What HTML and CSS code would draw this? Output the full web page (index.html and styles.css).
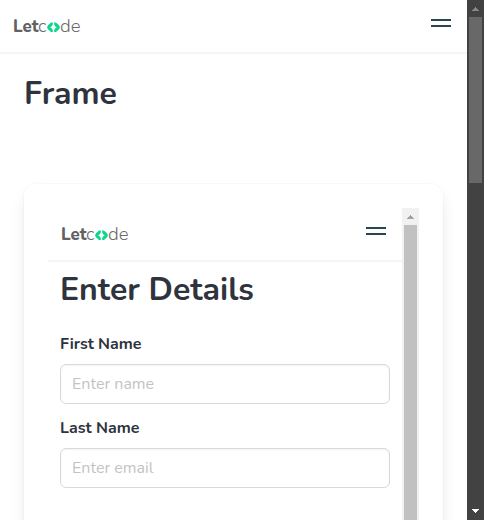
FILE: index.html
```
<!DOCTYPE html>
<html lang="en">
<head>
<meta charset="utf-8">
<title>Frame</title>
<link rel="stylesheet" href="styles.css">
</head>
<body>
<div class="window">
  <div class="page">
    <header class="nav">
      <svg class="logo" width="70" height="24" viewBox="0 -3 70 24" role="img" aria-label="Letcode">
        <text class="logo-bold" x="0" y="14.3" textLength="25.5" lengthAdjust="spacingAndGlyphs">Let</text>
        <text class="logo-thin" x="25" y="14.3" textLength="8.5" lengthAdjust="spacingAndGlyphs">c</text>
        <path class="logo-mark" d="M39.8 4.6H38L34.7 7.5Q33.6 9.3 34.7 11.1L38 14H39.8V12.2Q39.3 10.2 37.2 9.3Q39.3 8.4 39.8 6.4Z M41.2 4.6H43L46.3 7.5Q47.4 9.3 46.3 11.1L43 14H41.2V12.2Q41.7 10.2 43.8 9.3Q41.7 8.4 41.2 6.4Z"/>
        <text class="logo-thin" x="47" y="14.3" textLength="20.5" lengthAdjust="spacingAndGlyphs">de</text>
      </svg>
      <div class="burger"><span></span><span></span></div>
    </header>
    <main class="content">
      <h1 class="title frame-title">Frame</h1>
      <section class="card">
        <div class="frame">
          <div class="frame-page">
            <header class="nav">
              <svg class="logo" width="70" height="24" viewBox="0 -3 70 24" role="img" aria-label="Letcode">
                <text class="logo-bold" x="0" y="14.3" textLength="25.5" lengthAdjust="spacingAndGlyphs">Let</text>
                <text class="logo-thin" x="25" y="14.3" textLength="8.5" lengthAdjust="spacingAndGlyphs">c</text>
                <path class="logo-mark" d="M39.8 4.6H38L34.7 7.5Q33.6 9.3 34.7 11.1L38 14H39.8V12.2Q39.3 10.2 37.2 9.3Q39.3 8.4 39.8 6.4Z M41.2 4.6H43L46.3 7.5Q47.4 9.3 46.3 11.1L43 14H41.2V12.2Q41.7 10.2 43.8 9.3Q41.7 8.4 41.2 6.4Z"/>
                <text class="logo-thin" x="47" y="14.3" textLength="20.5" lengthAdjust="spacingAndGlyphs">de</text>
              </svg>
              <div class="burger"><span></span><span></span></div>
            </header>
            <form class="form">
              <h1 class="title">Enter Details</h1>
              <label class="label first" for="first">First Name</label>
              <input class="input" id="first" placeholder="Enter name">
              <label class="label last" for="last">Last Name</label>
              <input class="input" id="last" placeholder="Enter email">
            </form>
          </div>
          <div class="scrollbar light">
            <svg class="arrow" width="17" height="17" viewBox="0 0 17 17" shape-rendering="crispEdges"><path d="M8 7h1v1h1v1h1v1h1v1H5v-1h1V9h1V8h1z"/></svg>
            <div class="thumb"></div>
          </div>
        </div>
      </section>
    </main>
  </div>
  <div class="scrollbar dark">
    <svg class="arrow" width="17" height="17" viewBox="0 0 17 17" shape-rendering="crispEdges"><path d="M8 7h1v1h1v1h1v1h1v1H5v-1h1V9h1V8h1z"/></svg>
    <div class="thumb"></div>
    <svg class="arrow down" width="17" height="17" viewBox="0 0 17 17" shape-rendering="crispEdges"><path d="M5 6h7v1h-1v1h-1v1H9v1H8V9H7V8H6V7H5z"/></svg>
  </div>
</div>
</body>
</html>
```
FILE: styles.css
```
* { box-sizing: border-box; }
body {
  margin: 0;
  overflow: hidden;
  background: #fff;
  color: #2e333d;
  font-family: Nunito, Lato, sans-serif;
  font-size: 16px;
}
.window { display: flex; width: 484px; height: 520px; overflow: hidden; }
.page { width: 467px; overflow: hidden; }
.nav {
  display: flex;
  justify-content: space-between;
  height: 54px;
  padding: 15px 16px 0 13px;
  border-bottom: 2px solid #f5f5f5;
}
.logo { display: block; overflow: visible; }
.logo text { font-family: Nunito, Lato, sans-serif; font-size: 17px; }
.logo-bold { font-weight: 800; fill: #626262; }
.logo .logo-thin { font-weight: 300; fill: #6c6c6c; }
.logo-mark { fill: #0bd68b; }
.burger { display: flex; flex-direction: column; gap: 4px; width: 20px; padding-top: 4px; }
.burger span { height: 2px; background: #264653; }
.content { padding: 0 24px; }
.title { margin: 0; font-size: 32px; font-weight: 700; line-height: 36px; white-space: nowrap; }
.frame-title { padding-top: 22px; }
.card {
  height: 700px;
  margin-top: 72px;
  padding: 24px;
  border-radius: 12px;
  background: #fff;
  box-shadow: 0 8px 16px -2px rgba(10, 10, 10, .1), 0 0 0 1px rgba(10, 10, 10, .02);
}
.frame { display: flex; height: 620px; }
.frame-page { width: 354px; }
.form { display: flex; flex-direction: column; padding: 10px 12px 0; }
.label { font-weight: 700; line-height: 24px; }
.first { margin: 24px 0 8px; }
.last { margin: 12px 0 8px; }
.input {
  width: 330px;
  height: 40px;
  padding: 0 11px;
  border: 1px solid #d6d9e2;
  border-radius: 6px;
  background: #fff;
  box-shadow: inset 0 1px 2px rgba(10, 10, 10, .05);
  font: inherit;
}
.input::placeholder { color: #c2c3c6; opacity: 1; }
.scrollbar { display: flex; flex-direction: column; width: 17px; flex: none; }
.arrow { display: block; }
.thumb { width: 13px; margin: 0 2px; }
.light { background: #f1f1f1; }
.light .arrow { fill: #a3a3a3; }
.light .thumb { height: 500px; background: #c1c1c1; }
.dark { background: #424242; }
.dark .arrow { fill: #868686; }
.dark .thumb { height: 166px; background: #686868; }
.dark .down { margin-top: auto; fill: #fff; }
```
